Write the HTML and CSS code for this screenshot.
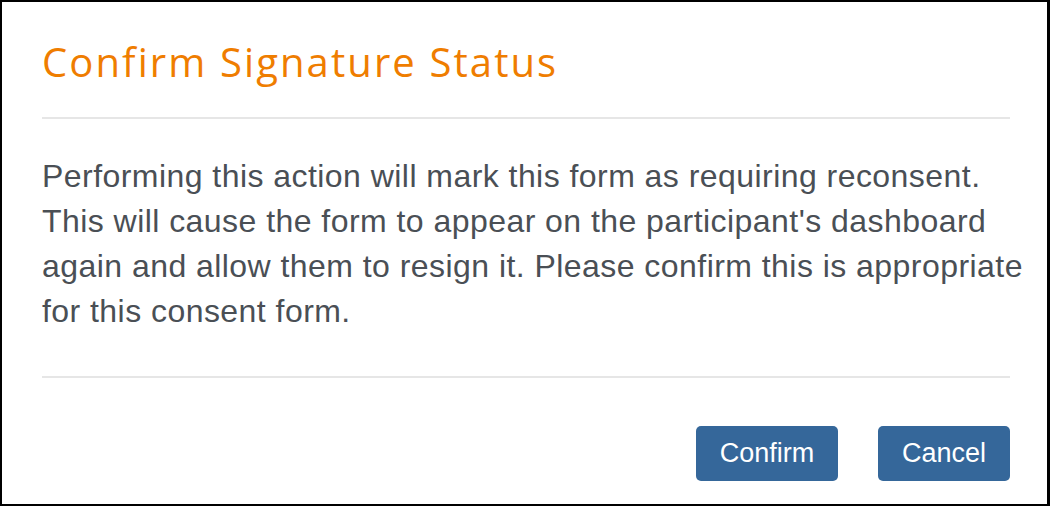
FILE: index.html
```html
<!DOCTYPE html>
<html>
<head>
<meta charset="utf-8">
<link rel="stylesheet" href="styles.css">
</head>
<body>
<div class="modal">
  <div class="modal-header">
    <h1 class="modal-title">Confirm Signature Status</h1>
  </div>
  <div class="modal-body">
    <p>Performing this action will mark this form as requiring reconsent.<br>This will cause the form to appear on the participant's dashboard<br>again and allow them to resign it. Please confirm this is appropriate<br>for this consent form.</p>
  </div>
  <div class="modal-footer">
    <button class="btn">Confirm</button>
    <button class="btn btn-cancel">Cancel</button>
  </div>
</div>
</body>
</html>
```

FILE: styles.css
```css
html, body {
  margin: 0;
  padding: 0;
  background: #fff;
}
.modal {
  box-sizing: border-box;
  width: 1050px;
  height: 506px;
  border: 2px solid #000;
  border-right-width: 3px;
  background: #fff;
  padding: 0 37px 0 40px;
  display: flex;
  flex-direction: column;
}
.modal-header {
  border-bottom: 2px solid #e6e6e6;
  height: 117px;
  box-sizing: border-box;
  padding-top: 36px;
}
.modal-title {
  margin: 0;
  font-family: "Open Sans", "Noto Sans", sans-serif;
  font-weight: 400;
  font-size: 40px;
  letter-spacing: 2.1px;
  line-height: 48px;
  color: #ef7d00;
}
.modal-body {
  border-bottom: 2px solid #e6e6e6;
  height: 259px;
  box-sizing: border-box;
  padding-top: 35px;
}
.modal-body p {
  margin: 0;
  white-space: nowrap;
  font-family: "Liberation Sans", Arial, sans-serif;
  font-size: 32px;
  letter-spacing: 0.45px;
  line-height: 45px;
  color: #4a4f55;
}
.modal-footer {
  display: flex;
  justify-content: flex-end;
  gap: 40px;
  padding-top: 48px;
}
.btn {
  font-family: "Liberation Sans", Arial, sans-serif;
  font-size: 27px;
  color: #fff;
  background: #35679a;
  border: none;
  border-radius: 5px;
  height: 55px;
  width: 142px;
  padding: 0;
}
.btn-cancel {
  width: 132px;
}
```
